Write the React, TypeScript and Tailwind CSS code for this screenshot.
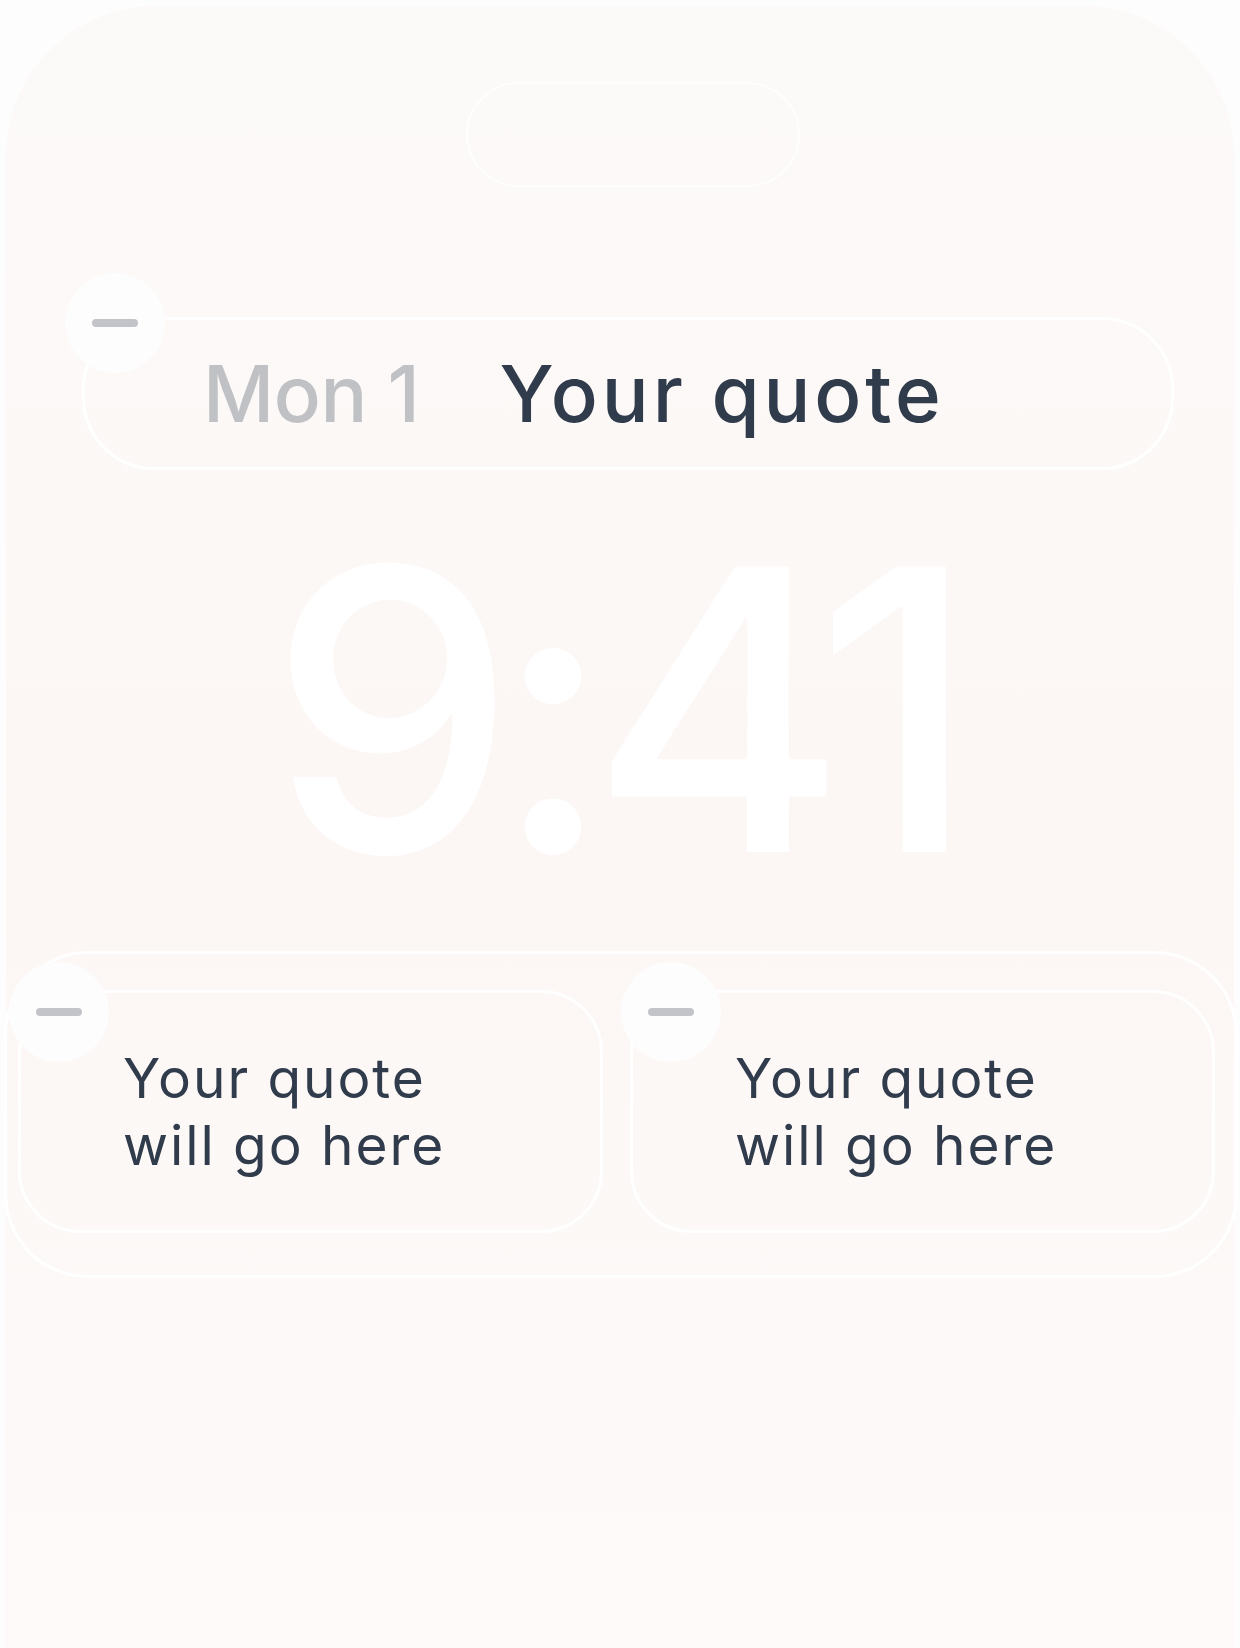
import type { ReactNode } from "react";

const FONT = "font-['Inter','Liberation_Sans',sans-serif]";

function MinusBadge({ className }: { className: string }) {
  return (
    <div
      className={`absolute flex h-[100px] w-[100px] items-center justify-center rounded-full bg-[#fefdfd] ${className}`}
    >
      <div className="h-[8px] w-[46px] rounded-full bg-[#c3c4c9]" />
    </div>
  );
}

function QuoteWidget({ children }: { children: ReactNode }) {
  return (
    <div className="relative flex h-[243px] w-[585px] items-center rounded-[62px] border-[3px] border-white pl-[102px]">
      <MinusBadge className="-left-[12px] -top-[31px]" />
      <p className="text-[55px] leading-[67px] tracking-[0.035em] text-[#303b4c]">
        {children}
      </p>
    </div>
  );
}

export default function App() {
  return (
    <div className={`h-[1648px] w-[1240px] overflow-hidden bg-[#fefdfd] ${FONT}`}>
      <div className="ml-[6px] mt-[6px] flex h-[1642px] w-[1228px] flex-col rounded-t-[150px] border-l border-t border-[#fcf8f6] bg-linear-to-b from-[#fcfaf9] via-[#fcf7f5] to-[#fdfaf9]">
        {/* dynamic island */}
        <div className="ml-[459px] mt-[75px] h-[105px] w-[334px] rounded-full border-2 border-white/80" />

        {/* top widget */}
        <div className="relative ml-[75px] mt-[130px] flex h-[153px] w-[1092px] items-center gap-[80px] rounded-[72px] border-[3px] border-white pl-[118px]">
          <MinusBadge className="-left-[20px] -top-[47px]" />
          <span className="text-[78px] font-medium leading-none tracking-[-0.005em] text-[#c0c1c5]">
            Mon 1
          </span>
          <span className="text-[78px] font-medium leading-none tracking-[0.05em] text-[#303b4c]">
            Your quote
          </span>
        </div>

        {/* clock */}
        <div className="ml-[262px] mt-[44px] text-[392px] font-medium leading-none tracking-[-0.057em] text-white">
          9:41
        </div>

        {/* bottom widgets */}
        <div className="-ml-[3px] mt-[45px] flex h-[327px] w-[1234px] gap-[27px] rounded-[84px] border-[3px] border-white pl-[11px] pt-[36px]">
          <QuoteWidget>
            Your quote
            <br />
            will go here
          </QuoteWidget>
          <QuoteWidget>
            Your quote
            <br />
            will go here
          </QuoteWidget>
        </div>
      </div>
    </div>
  );
}
